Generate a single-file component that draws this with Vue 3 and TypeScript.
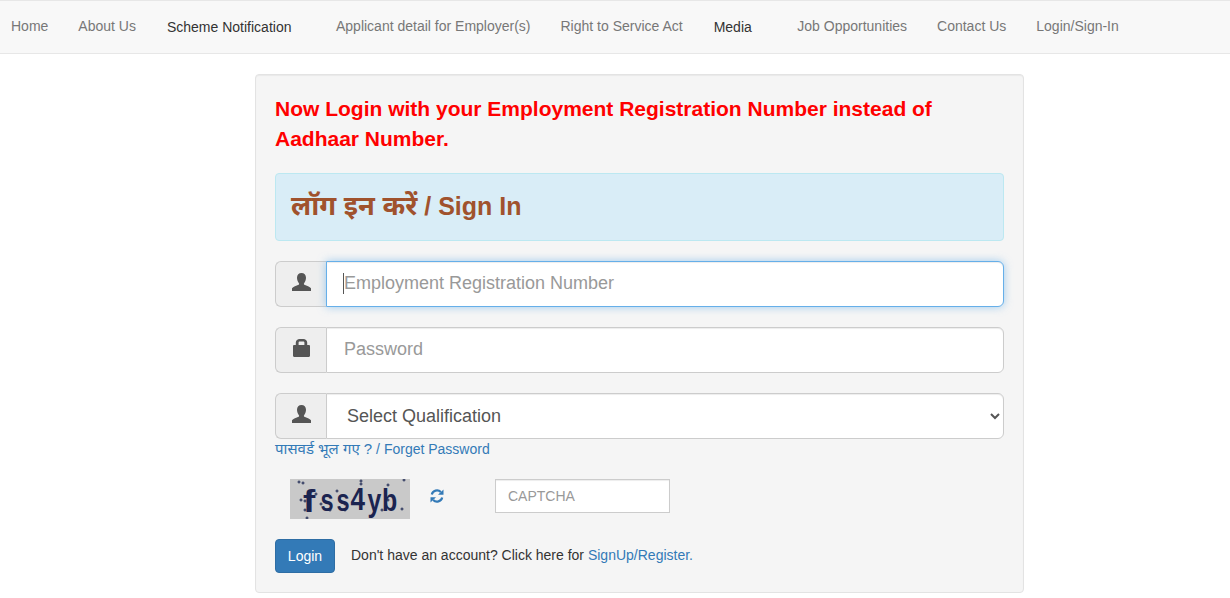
<script setup lang="ts">
interface NavItem { label: string; dark?: boolean; gap: 'normal' | 'plus' | 'wide' | 'wider' }
const nav: NavItem[] = [
  { label: 'Home', gap: 'normal' },
  { label: 'About Us', gap: 'plus' },
  { label: 'Scheme Notification', dark: true, gap: 'wide' },
  { label: 'Applicant detail for Employer(s)', gap: 'normal' },
  { label: 'Right to Service Act', gap: 'plus' },
  { label: 'Media', dark: true, gap: 'wider' },
  { label: 'Job Opportunities', gap: 'normal' },
  { label: 'Contact Us', gap: 'normal' },
  { label: 'Login/Sign-In', gap: 'normal' },
]
const noise: [number, number][] = [
  [9, 3], [13, 4], [71, 2], [71, 5], [114, 1], [98, 6], [47, 12], [26, 15], [11, 21], [15, 22],
  [15, 31], [17, 39], [31, 25], [40, 31], [55, 31], [55, 25], [98, 21], [92, 31], [112, 30],
]
const letters = [
  { c: 'f', x: 13, y: 33, size: 32, sx: 1.15 },
  { c: 's', x: 30.500, y: 31.500, size: 31, sx: .76 },
  { c: 's', x: 46.500, y: 31.500, size: 31, sx: .76 },
  { c: '4', x: 60.500, y: 31, size: 31, sx: .84 },
  { c: 'y', x: 77.500, y: 32, size: 31, sx: .8 },
  { c: 'b', x: 92, y: 32, size: 32, sx: .78 },
]
const userPath = 'M9.500 0C12.200 0 14 1.800 14 4.800c0 2-.8 4.200-1.900 5.400-.4.5-.3 1.200.3 1.500 2.200 1 5.500 2 6.600 3.500V18H0v-2.800c1.100-1.500 4.400-2.500 6.600-3.500.6-.3.7-1 .3-1.500C5.800 9 5 6.800 5 4.800 5 1.800 6.800 0 9.500 0z'
</script>

<template>
  <div class="page">
    <nav class="navbar">
      <a
        v-for="item in nav"
        :key="item.label"
        class="nav-link"
        :class="[item.gap, { dark: item.dark }]"
        href="#"
      >{{ item.label }}</a>
    </nav>

    <main class="well">
      <h4 class="notice">Now Login with your Employment Registration Number instead of Aadhaar Number.</h4>
      <div class="alert"><span class="hi-large">लॉग इन करें</span> / Sign In</div>

      <div class="input-group">
        <span class="addon">
          <svg width="19" height="18" viewBox="0 0 19 18" aria-hidden="true"><path fill="#555" :d="userPath"/></svg>
        </span>
        <span class="field-wrap">
          <input class="control focused" type="text" placeholder="Employment Registration Number" />
          <i class="caret-line"></i>
        </span>
      </div>

      <div class="input-group">
        <span class="addon lock">
          <svg width="17" height="18" viewBox="0 0 17 18" aria-hidden="true"><path fill="#555" fill-rule="evenodd" d="M2.800 6V3.500C2.800 1.400 4.800 0 6.500 0h4c1.700 0 3.700 1.400 3.700 3.500V6h1.600c.7 0 1.200.5 1.200 1.200v9.600c0 .7-.5 1.200-1.200 1.200H1.200C.5 18 0 17.500 0 16.800V7.200C0 6.500.5 6 1.200 6zM5.600 6h5.800V3.500c0-.6-.5-1.100-1.100-1.100H6.700c-.6 0-1.100.5-1.100 1.100z"/></svg>
        </span>
        <span class="field-wrap">
          <input class="control" type="password" placeholder="Password" />
        </span>
      </div>

      <div class="input-group last">
        <span class="addon">
          <svg width="19" height="18" viewBox="0 0 19 18" aria-hidden="true"><path fill="#555" :d="userPath"/></svg>
        </span>
        <span class="field-wrap">
          <select class="control select">
            <option>Select Qualification</option>
          </select>
        </span>
      </div>

      <a class="forgot" href="#"><span class="hi-small">पासवर्ड भूल गए ?</span> / Forget Password</a>

      <div class="captcha-row">
        <svg class="captcha" width="120" height="40" viewBox="0 0 120 40" role="img" aria-label="captcha">
          <rect width="120" height="40" fill="#c9c9c9" />
          <g class="captcha-text" fill="#1b2450">
            <text
              v-for="(l, i) in letters"
              :key="i"
              :transform="`translate(${l.x} ${l.y}) scale(${l.sx} 1)`"
              :font-size="l.size"
            >{{ l.c }}</text>
          </g>
          <g fill="#1b2450">
            <g v-for="(p, i) in noise" :key="i">
              <rect :x="p[0] - 1.500" :y="p[1] - .5" width="3" height="1" />
              <rect :x="p[0] - .5" :y="p[1] - 1.500" width="1" height="3" />
            </g>
          </g>
        </svg>
        <a class="refresh" href="#" aria-label="Refresh captcha">
          <svg width="14" height="14" viewBox="0 0 14 14" aria-hidden="true">
            <path fill="none" stroke="#337ab7" stroke-width="2.200" d="M1.800 5.600A5.300 5.300 0 0 1 10.800 3.100" />
            <path fill="#337ab7" d="M13.500 .4v5.400H8z" />
            <path fill="none" stroke="#337ab7" stroke-width="2.200" d="M12.200 8.400A5.300 5.300 0 0 1 3.200 10.900" />
            <path fill="#337ab7" d="M.5 13.600V8.200H6z" />
          </svg>
        </a>
        <input class="captcha-input" type="text" placeholder="CAPTCHA" />
      </div>

      <div class="login-row">
        <button class="btn" type="button">Login</button>
        <span class="signup">Don't have an account? Click here for <a href="#">SignUp/Register.</a></span>
      </div>
    </main>
  </div>
</template>

<style>
html, body { margin: 0; background: #fff; overflow: hidden; }
</style>

<style scoped>
.page {
  font-family: "Liberation Sans", Arial, "Noto Sans", sans-serif;
  font-size: 14px;
  line-height: 20px;
  color: #333;
  height: 598px;
  overflow: hidden;
}
.navbar {
  display: flex;
  box-sizing: border-box;
  height: 54px;
  padding-left: 11px;
  background: #f8f8f8;
  border-top: 1px solid #e7e7e7;
  border-bottom: 1px solid #e7e7e7;
}
.nav-link {
  color: #777;
  text-decoration: none;
  margin-right: 30px;
  padding-top: 15px;
}
.nav-link.dark {
  color: #333;
  padding-top: 16px;
}
.nav-link.plus { margin-right: 31px; }
.nav-link.wide { margin-right: 44.500px; }
.nav-link.wider { margin-right: 45.500px; }
.well {
  box-sizing: border-box;
  width: 769px;
  height: 519px;
  margin: 20px 0 0 255px;
  padding: 19px;
  background: #f5f5f5;
  border: 1px solid #e3e3e3;
  border-radius: 4px;
  box-shadow: inset 0 1px 1px rgba(0, 0, 0, .05);
}
.notice {
  margin: 0 0 19px;
  font-size: 21px;
  line-height: 30px;
  font-weight: 700;
  color: #f00;
}
.alert {
  box-sizing: border-box;
  height: 68px;
  padding: 14px 15px;
  margin-bottom: 20px;
  background: #d9edf7;
  border: 1px solid #bce8f1;
  border-radius: 4px;
  color: #a0522d;
  font-size: 25px;
  line-height: 36px;
  font-weight: 700;
}
.hi-large { font-size: 27.400px; }
.hi-small { font-size: 15px; }
.input-group {
  display: flex;
  height: 46px;
  margin-bottom: 20px;
}
.input-group.last { margin-bottom: 0; }
.addon {
  box-sizing: border-box;
  flex: 0 0 51px;
  display: flex;
  justify-content: center;
  padding: 11px 0 0 1px;
  background: #eee;
  border: 1px solid #ccc;
  border-right: 0;
  border-radius: 6px 0 0 6px;
}
.addon.lock { padding-left: 0; }
.addon svg { display: block; }
.field-wrap {
  position: relative;
  flex: 1;
  display: block;
}
.control {
  box-sizing: border-box;
  display: block;
  width: 100%;
  height: 46px;
  padding: 9px 17px 11px;
  font: 18px/1.33 "Liberation Sans", Arial, sans-serif;
  color: #555;
  background: #fff;
  border: 1px solid #ccc;
  border-radius: 0 6px 6px 0;
  outline: 0;
  box-shadow: inset 0 1px 1px rgba(0, 0, 0, .075);
}
.control.select { padding: 10px 16px; }
.control::placeholder, .captcha-input::placeholder { color: #999; opacity: 1; }
.control.focused {
  border-color: #66afe9;
  box-shadow: inset 0 1px 1px rgba(0, 0, 0, .075), 0 0 8px rgba(102, 175, 233, .6);
}
.caret-line {
  position: absolute;
  left: 17px;
  top: 12px;
  width: 1px;
  height: 21px;
  background: #555;
}
.forgot {
  display: block;
  height: 20px;
  color: #337ab7;
  text-decoration: none;
}
.captcha-row {
  display: flex;
  align-items: flex-start;
  height: 40px;
  margin-top: 20px;
  padding-left: 15px;
}
.captcha { display: block; flex: none; }
.captcha-text { font-family: "Liberation Sans", Arial, sans-serif; font-weight: 700; }
.refresh {
  display: block;
  height: 14px;
  margin: 10px 0 0 20px;
}
.refresh svg { display: block; }
.captcha-input {
  box-sizing: border-box;
  width: 175px;
  height: 34px;
  margin-left: 51px;
  padding: 6px 12px;
  font: 14px "Liberation Sans", Arial, sans-serif;
  background: #fff;
  border: 1px solid #ccc;
  outline: 0;
  box-shadow: inset 0 1px 1px rgba(0, 0, 0, .075);
}
.login-row {
  display: flex;
  align-items: center;
  height: 34px;
  margin-top: 20px;
}
.btn {
  box-sizing: border-box;
  width: 60px;
  height: 34px;
  padding: 0;
  font: 14px "Liberation Sans", Arial, sans-serif;
  color: #fff;
  background: #337ab7;
  border: 1px solid #2e6da4;
  border-radius: 4px;
}
.signup { margin: -2px 0 0 16px; }
.signup a { color: #337ab7; text-decoration: none; }
</style>
